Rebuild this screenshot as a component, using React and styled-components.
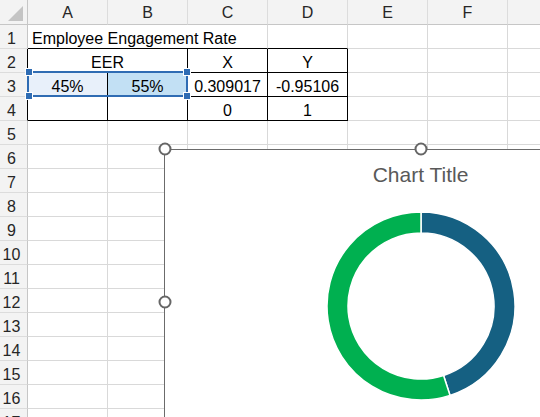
import React from 'react';
import styled, { createGlobalStyle } from 'styled-components';

const GlobalStyle = createGlobalStyle`
  html, body {
    margin: 0;
    padding: 0;
    overflow: hidden;
    background: #ffffff;
  }
  body {
    font-family: "Liberation Sans", Arial, sans-serif;
  }
`;

const GRID = '#d9d9d9';
const HEAD_LINE = '#c6c6c6';
const INK = '#000000';

const Page = styled.div`
  position: relative;
  width: 540px;
  height: 417px;
  overflow: hidden;
`;

const Sheet = styled.div`
  display: grid;
  grid-template-columns: 28px repeat(7, 80px);
  grid-template-rows: 25px;
  grid-auto-rows: 24px;
  font-size: 16px;
  color: #000;
`;

const Corner = styled.div`
  position: relative;
  background: #f3f3f3;
  border-right: 1px solid ${HEAD_LINE};
  border-bottom: 1px solid ${HEAD_LINE};
  box-sizing: border-box;

  &::after {
    content: '';
    position: absolute;
    right: 4px;
    bottom: 3px;
    width: 0;
    height: 0;
    border-left: 15px solid transparent;
    border-bottom: 15px solid #c4c4c4;
  }
`;

const ColHead = styled.div`
  display: flex;
  align-items: center;
  justify-content: center;
  padding-top: 2px;
  box-sizing: border-box;
  background: #f3f3f3;
  border-right: 1px solid #dcdcdc;
  border-bottom: 1px solid ${HEAD_LINE};
  color: #262626;
  line-height: 18px;
`;

const RowHead = styled.div`
  display: flex;
  align-items: flex-end;
  justify-content: center;
  padding: 0 4px 1px 0;
  box-sizing: border-box;
  background: #f3f3f3;
  border-right: 1px solid ${(p) => p.$right || HEAD_LINE};
  border-bottom: 1px solid #dcdcdc;
  color: #262626;
  line-height: 16px;
`;

const Cell = styled.div`
  display: flex;
  align-items: flex-end;
  justify-content: ${(p) => (p.$align === 'left' ? 'flex-start' : 'center')};
  grid-column: span ${(p) => p.$span || 1};
  padding: 0 4px 1px;
  box-sizing: border-box;
  white-space: nowrap;
  line-height: 16px;
  background: ${(p) => p.$fill || '#ffffff'};
  border-right: 1px solid ${(p) => p.$right || GRID};
  border-bottom: 1px solid ${(p) => p.$bottom || GRID};
`;

const Selection = styled.div`
  position: absolute;
  left: 27px;
  top: 71px;
  width: 161px;
  height: 26px;
  box-sizing: border-box;
  border: 2px solid #2f6cb3;
  pointer-events: none;
`;

const SelHandle = styled.span`
  position: absolute;
  width: 6px;
  height: 6px;
  background: #2f6cb3;
  border: 1px solid #ffffff;
  ${(p) => (p.$y === 'top' ? 'top: -5px;' : 'bottom: -5px;')}
  ${(p) => (p.$x === 'left' ? 'left: -4px;' : 'right: -5px;')}
`;

const ChartBox = styled.div`
  position: absolute;
  left: 164px;
  top: 149px;
  width: 513px;
  height: 307px;
  box-sizing: border-box;
  border: 1px solid #6b6b6b;
  background: #ffffff;
  display: flex;
  flex-direction: column;
  align-items: center;
`;

const ChartTitle = styled.div`
  margin-top: 13px;
  font-size: 21px;
  line-height: 24px;
  color: #595959;
`;

const Donut = styled.svg`
  margin-top: 23px;
  display: block;
`;

const Knob = styled.span`
  position: absolute;
  width: 9px;
  height: 9px;
  border-radius: 50%;
  border: 2px solid #666666;
  background: #ffffff;
  left: ${(p) => p.$x}px;
  top: ${(p) => p.$y}px;
  transform: translate(-50%, -50%);
`;

const rows = [
  [
    { text: 'Employee Engagement Rate', align: 'left', span: 3, bottom: INK, right: GRID },
    { text: '', bottom: INK },
    { text: '' },
    { text: '' },
    { text: '' },
  ],
  [
    { text: 'EER', span: 2, right: INK, bottom: INK },
    { text: 'X', right: INK, bottom: INK },
    { text: 'Y', right: INK, bottom: INK },
    { text: '' },
    { text: '' },
    { text: '' },
  ],
  [
    { text: '45%', right: INK, bottom: INK, fill: '#e8f0fa' },
    { text: '55%', right: INK, bottom: INK, fill: '#c2e0f4' },
    { text: '0.309017', right: INK, bottom: INK },
    { text: '-0.95106', right: INK, bottom: INK },
    { text: '' },
    { text: '' },
    { text: '' },
  ],
  [
    { text: '', right: INK, bottom: INK },
    { text: '', right: INK, bottom: INK },
    { text: '0', right: INK, bottom: INK },
    { text: '1', right: INK, bottom: INK },
    { text: '' },
    { text: '' },
    { text: '' },
  ],
];

const columns = ['A', 'B', 'C', 'D', 'E', 'F', 'G'];

function arcPath(cx, cy, rOut, rIn, startDeg, endDeg) {
  const toXY = (r, d) => {
    const a = ((d - 90) * Math.PI) / 180;
    return [cx + r * Math.cos(a), cy + r * Math.sin(a)];
  };
  const large = endDeg - startDeg > 180 ? 1 : 0;
  const [x1, y1] = toXY(rOut, startDeg);
  const [x2, y2] = toXY(rOut, endDeg);
  const [x3, y3] = toXY(rIn, endDeg);
  const [x4, y4] = toXY(rIn, startDeg);
  return `M${x1} ${y1} A${rOut} ${rOut} 0 ${large} 1 ${x2} ${y2} L${x3} ${y3} A${rIn} ${rIn} 0 ${large} 0 ${x4} ${y4} Z`;
}

const slices = [
  { value: 0.45, color: '#156082' },
  { value: 0.55, color: '#00b050' },
];

const DonutChart = () => {
  let start = 0;
  return (
    <Donut width="192" height="192" viewBox="0 0 192 192">
      {slices.map((s) => {
        const end = start + s.value * 360;
        const d = arcPath(96, 96, 94, 73, start, end);
        start = end;
        return <path key={s.color} d={d} fill={s.color} stroke="#ffffff" strokeWidth="1.5" />;
      })}
    </Donut>
  );
};

export default function App() {
  const emptyRows = Array.from({ length: 13 }, (_, i) => i + 5);

  return (
    <Page>
      <GlobalStyle />
      <Sheet>
        <Corner />
        {columns.map((c) => (
          <ColHead key={c}>{c}</ColHead>
        ))}

        {rows.map((cells, r) => (
          <React.Fragment key={r}>
            <RowHead $right={r > 0 ? '#000000' : undefined}>{r + 1}</RowHead>
            {cells.map((cell, i) => (
              <Cell
                key={i}
                $span={cell.span}
                $align={cell.align}
                $right={cell.right}
                $bottom={cell.bottom}
                $fill={cell.fill}
              >
                {cell.text}
              </Cell>
            ))}
          </React.Fragment>
        ))}

        {emptyRows.map((n) => (
          <React.Fragment key={n}>
            <RowHead>{n}</RowHead>
            {columns.map((c) => (
              <Cell key={c} />
            ))}
          </React.Fragment>
        ))}
      </Sheet>

      <Selection>
        <SelHandle $x="left" $y="top" />
        <SelHandle $x="right" $y="top" />
        <SelHandle $x="left" $y="bottom" />
        <SelHandle $x="right" $y="bottom" />
      </Selection>

      <ChartBox>
        <ChartTitle>Chart Title</ChartTitle>
        <DonutChart />
      </ChartBox>
      <Knob $x={165} $y={149} />
      <Knob $x={421} $y={149} />
      <Knob $x={165} $y={302} />
    </Page>
  );
}
